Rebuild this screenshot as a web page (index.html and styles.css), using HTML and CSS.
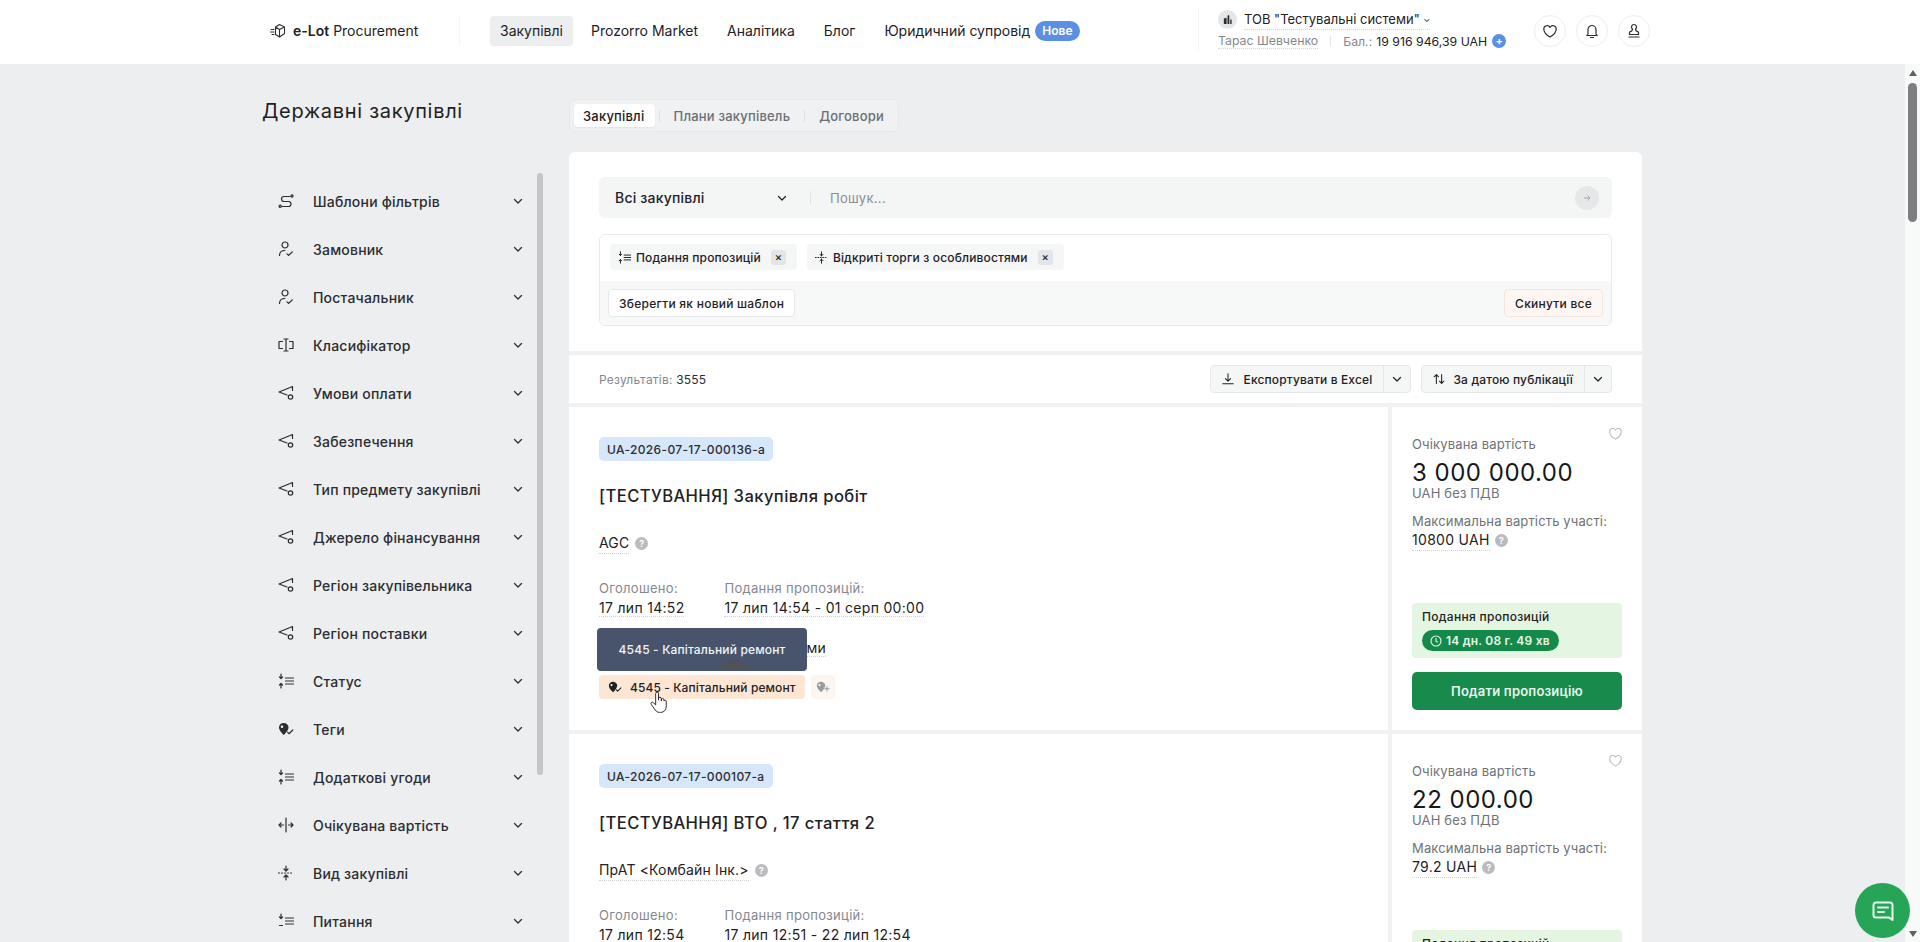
FILE: index.html
```html
<!DOCTYPE HTML>
<html lang="uk">
	<head>
		<title>e-Lot Procurement - Державні закупівлі</title>
		<meta charset="utf-8" />
		<link rel="stylesheet" href="styles.css">
	</head>
	<body>
		<svg class="sprite" xmlns="http://www.w3.org/2000/svg">
			<symbol id="i-route" viewBox="0 0 16 16"><path d="M12 3.500H6a2.500 2.500 0 0 0 0 5h4.500a2.500 2.500 0 0 1 0 5H4"/><circle cx="14" cy="3" r="1.100"/><circle cx="2.200" cy="13.300" r="1.100"/></symbol>
			<symbol id="i-user" viewBox="0 0 16 16"><circle cx="7" cy="4" r="3"/><path d="M1.500 14.500c0-3 2-5 5.500-5"/><path d="M9 12.800l1.600 1.600 3.600-3.400"/></symbol>
			<symbol id="i-class" viewBox="0 0 16 16"><path d="M4.500 4.500H1v7h3.500M11.500 4.500H15v7h-3.500M8 2v12M6 2h4M6 14h4"/></symbol>
			<symbol id="i-send" viewBox="0 0 16 16"><path d="M14.500 1.500L1 7l8 3M14.500 1.500v4"/><circle cx="12.500" cy="12" r="2.200"/></symbol>
			<symbol id="i-status" viewBox="0 0 16 16"><path d="M3 1v4.500M1.500 4L3 5.500 4.500 4M3 15v-4.500M1.500 12L3 10.500 4.500 12M7.500 5h8M7.500 8h8M7.500 11h8"/></symbol>
			<symbol id="i-meal" viewBox="0 0 16 16"><path d="M3 1v4.500M1.500 4L3 5.500 4.500 4M1.500 12.500h3M7.500 5h8M7.500 8h8M7.500 11h8"/></symbol>
			<symbol id="i-tag" viewBox="0 0 16 16"><path class="solid" d="M5.500 2c3 0 5 2 5 4.300 0 3.200-3.500 6.500-4.700 7.700C4.500 12.700 1 9.700 1 6.300 1 4 3 2 5.500 2z"/><circle class="hole" cx="4" cy="5.800" r="1.200"/><path d="M9.500 11.200l1.500 1.500 3.800-3.700"/></symbol>
			<symbol id="i-tag-add" viewBox="0 0 16 16"><path class="solid" d="M5.500 2c3 0 5 2 5 4.300 0 3.200-3.500 6.500-4.700 7.700C4.500 12.700 1 9.700 1 6.300 1 4 3 2 5.500 2z"/><circle class="hole" cx="4" cy="5.800" r="1.200"/><path d="M12.500 7.500v5M10 10h5"/></symbol>
			<symbol id="i-range" viewBox="0 0 16 16"><path d="M8 1v14M1 8h4.500M3 6L1 8l2 2M15 8h-4.500M13 6l2 2-2 2"/></symbol>
			<symbol id="i-kind" viewBox="0 0 16 16"><path d="M8 1v5M6 4l2 2 2-2M8 15v-5M6 12l2-2 2 2"/><path stroke-dasharray="1 2" d="M0.500 8h15"/></symbol>
			<symbol id="i-chev" viewBox="0 0 12 12"><path d="M2.500 4.500L6 8l3.500-3.500"/></symbol>
			<symbol id="i-heart" viewBox="0 0 16 16"><path d="M8 14S1.800 10.500 1.800 6A3.300 3.300 0 0 1 8 4.400 3.300 3.300 0 0 1 14.200 6C14.200 10.500 8 14 8 14z"/></symbol>
		</svg>

		<div class="page">
			<header class="topbar">
				<div class="topbar-inner">
					<a class="logo">
						<svg class="logo-icon" viewBox="0 0 16 16"><path d="M9.500 1.500l5 2.500v6.500l-5 3.500-4-2.500V4zM5.500 4l4 2.500 5-2.500M9.500 6.500V14M1 6.500h3M.5 9h3.500M2 11.500h2"/></svg>
						<span><b>e-Lot</b> Procurement</span>
					</a>
					<nav class="nav">
						<a class="nav-item active">Закупівлі</a>
						<a class="nav-item">Prozorro Market</a>
						<a class="nav-item">Аналітика</a>
						<a class="nav-item">Блог</a>
						<a class="nav-item">Юридичний супровід<span class="badge-new">Нове</span></a>
					</nav>
					<div class="account">
						<div class="account-line">
							<span class="org-icon"><svg viewBox="0 0 12 12"><path d="M2 11V5l3-1v7zM6 11V2l1.500-1 .5 1v9zM9 11V6h1.500v5z"/></svg></span>
							<span class="org-name">ТОВ "Тестувальні системи" <span class="org-caret">⌄</span></span>
						</div>
						<div class="account-line small">
							<span class="user-name">Тарас Шевченко</span>
							<span class="account-sep"></span>
							<span class="balance-label">Бал.:</span>
							<span class="balance">19 916 946,39 UAH</span>
							<span class="plus-round">+</span>
						</div>
					</div>
					<div class="round-btns">
						<a class="round-btn"><svg class="ico"><use href="#i-heart"/></svg></a>
						<a class="round-btn"><svg class="ico" viewBox="0 0 16 16"><path d="M4 11V6.500a4 4 0 0 1 8 0V11l1.200 1.500H2.800zM6.500 14.500h3"/></svg></a>
						<a class="round-btn"><svg class="ico" viewBox="0 0 16 16"><path d="M8 1.500a2.500 2.500 0 0 0-1.500 4.500c0 2-1 2.500-3 3v2.500h9V9c-2-.5-3-1-3-3A2.500 2.500 0 0 0 8 1.500zM3 14h10"/></svg></a>
					</div>
				</div>
			</header>

			<div class="layout">
				<aside class="sidebar">
					<h1 class="page-title">Державні закупівлі</h1>
					<div class="filter-list">
						<div class="filter-thumb"></div>
						<div class="filter-item"><svg class="ico"><use href="#i-route"/></svg><span>Шаблони фільтрів</span><svg class="chev"><use href="#i-chev"/></svg></div>
						<div class="filter-item"><svg class="ico"><use href="#i-user"/></svg><span>Замовник</span><svg class="chev"><use href="#i-chev"/></svg></div>
						<div class="filter-item"><svg class="ico"><use href="#i-user"/></svg><span>Постачальник</span><svg class="chev"><use href="#i-chev"/></svg></div>
						<div class="filter-item"><svg class="ico"><use href="#i-class"/></svg><span>Класифікатор</span><svg class="chev"><use href="#i-chev"/></svg></div>
						<div class="filter-item"><svg class="ico"><use href="#i-send"/></svg><span>Умови оплати</span><svg class="chev"><use href="#i-chev"/></svg></div>
						<div class="filter-item"><svg class="ico"><use href="#i-send"/></svg><span>Забезпечення</span><svg class="chev"><use href="#i-chev"/></svg></div>
						<div class="filter-item"><svg class="ico"><use href="#i-send"/></svg><span>Тип предмету закупівлі</span><svg class="chev"><use href="#i-chev"/></svg></div>
						<div class="filter-item"><svg class="ico"><use href="#i-send"/></svg><span>Джерело фінансування</span><svg class="chev"><use href="#i-chev"/></svg></div>
						<div class="filter-item"><svg class="ico"><use href="#i-send"/></svg><span>Регіон закупівельника</span><svg class="chev"><use href="#i-chev"/></svg></div>
						<div class="filter-item"><svg class="ico"><use href="#i-send"/></svg><span>Регіон поставки</span><svg class="chev"><use href="#i-chev"/></svg></div>
						<div class="filter-item"><svg class="ico"><use href="#i-status"/></svg><span>Статус</span><svg class="chev"><use href="#i-chev"/></svg></div>
						<div class="filter-item"><svg class="ico"><use href="#i-tag"/></svg><span>Теги</span><svg class="chev"><use href="#i-chev"/></svg></div>
						<div class="filter-item"><svg class="ico"><use href="#i-status"/></svg><span>Додаткові угоди</span><svg class="chev"><use href="#i-chev"/></svg></div>
						<div class="filter-item"><svg class="ico"><use href="#i-range"/></svg><span>Очікувана вартість</span><svg class="chev"><use href="#i-chev"/></svg></div>
						<div class="filter-item"><svg class="ico"><use href="#i-kind"/></svg><span>Вид закупівлі</span><svg class="chev"><use href="#i-chev"/></svg></div>
						<div class="filter-item"><svg class="ico"><use href="#i-meal"/></svg><span>Питання</span><svg class="chev"><use href="#i-chev"/></svg></div>
					</div>
				</aside>

				<main class="content">
					<div class="tabs">
						<a class="tab active">Закупівлі</a>
						<span class="tab-sep"></span>
						<a class="tab">Плани закупівель</a>
						<span class="tab-sep"></span>
						<a class="tab">Договори</a>
					</div>

					<section class="card">
						<div class="filters">
							<div class="search">
								<div class="search-type">Всі закупівлі<svg class="chev"><use href="#i-chev"/></svg></div>
								<div class="search-input">Пошук...</div>
								<span class="search-go"><svg viewBox="0 0 12 12"><path d="M3 6h6M6.500 3.500L9 6 6.500 8.500"/></svg></span>
							</div>
							<div class="filter-box">
								<div class="chips">
									<span class="chip"><svg class="ico"><use href="#i-status"/></svg>Подання пропозицій<span class="chip-x">×</span></span>
									<span class="chip"><svg class="ico"><use href="#i-kind"/></svg>Відкриті торги з особливостями<span class="chip-x">×</span></span>
								</div>
								<div class="filter-actions">
									<a class="btn-plain">Зберегти як новий шаблон</a>
									<a class="btn-reset">Скинути все</a>
								</div>
							</div>
						</div>

						<div class="results-bar">
							<div class="results-count">Результатів: <b>3555</b></div>
							<div class="split-btn">
								<a class="split-main"><svg class="ico" viewBox="0 0 16 16"><path d="M8 2v8M5 7.500L8 10.500l3-3M2 13.500h12"/></svg>Експортувати в Excel</a>
								<a class="split-caret"><svg class="chev"><use href="#i-chev"/></svg></a>
							</div>
							<div class="split-btn">
								<a class="split-main sort"><svg class="ico" viewBox="0 0 16 16"><path d="M5 13V3M2.500 5.500L5 3l2.500 2.500M11 3v10M8.500 10.500L11 13l2.500-2.500"/></svg>За датою публікації</a>
								<a class="split-caret"><svg class="chev"><use href="#i-chev"/></svg></a>
							</div>
						</div>

						<article class="tender">
							<div class="tender-main">
								<span class="tender-id">UA-2026-07-17-000136-a</span>
								<h2 class="tender-title">[ТЕСТУВАННЯ] Закупівля робіт</h2>
								<div class="tender-buyer"><span class="dotted">AGC</span><span class="help">?</span></div>
								<div class="dates">
									<div>
										<div class="date-label">Оголошено:</div>
										<div class="date-value"><span class="dotted">17 лип 14:52</span></div>
									</div>
									<div>
										<div class="date-label">Подання пропозицій:</div>
										<div class="date-value"><span class="dotted">17 лип 14:54 - 01 серп 00:00</span></div>
									</div>
								</div>
								<div class="tender-kind"><span class="dotted">Відкриті торги з особливостями</span></div>
								<div class="tags">
									<div class="tooltip">4545 - Капітальний ремонт<span class="tooltip-arrow"></span></div>
									<span class="tag"><svg class="ico"><use href="#i-tag"/></svg>4545 - Капітальний ремонт</span>
									<span class="tag-add"><svg class="ico"><use href="#i-tag-add"/></svg></span>
									<svg class="hand" viewBox="0 0 18 24"><path d="M6 11V3a1.500 1.500 0 0 1 3 0v7V8.500a1.500 1.500 0 0 1 3 0V11 9.800a1.400 1.400 0 0 1 2.800 0V11v-.2a1.300 1.300 0 0 1 2.400.5V16c0 4-2 7-6 7H10c-3 0-4-2-5.500-4L1.300 14.500c-1-1.500.8-3 2.200-1.800L6 15z"/></svg>
								</div>
							</div>
							<div class="tender-side">
								<svg class="side-heart"><use href="#i-heart"/></svg>
								<div class="side-label">Очікувана вартість</div>
								<div class="side-amount">3 000 000.00</div>
								<div class="side-label tax">UAH без ПДВ</div>
								<div class="side-label max">Максимальна вартість участі:</div>
								<div class="side-value"><span class="dotted">10800 UAH</span><span class="help">?</span></div>
								<div class="status-box">
									<div class="status-name">Подання пропозицій</div>
									<span class="timer"><svg viewBox="0 0 12 12"><circle cx="6" cy="6" r="5"/><path d="M6 3v3.200l2 1.200"/></svg>14 дн. 08 г. 49 хв</span>
								</div>
								<a class="btn-submit">Подати пропозицію</a>
							</div>
						</article>

						<article class="tender">
							<div class="tender-main">
								<span class="tender-id">UA-2026-07-17-000107-a</span>
								<h2 class="tender-title">[ТЕСТУВАННЯ] ВТО , 17 стаття 2</h2>
								<div class="tender-buyer"><span class="dotted">ПрАТ &lt;Комбайн Інк.&gt;</span><span class="help">?</span></div>
								<div class="dates">
									<div>
										<div class="date-label">Оголошено:</div>
										<div class="date-value"><span class="dotted">17 лип 12:54</span></div>
									</div>
									<div>
										<div class="date-label">Подання пропозицій:</div>
										<div class="date-value"><span class="dotted">17 лип 12:51 - 22 лип 12:54</span></div>
									</div>
								</div>
							</div>
							<div class="tender-side">
								<svg class="side-heart"><use href="#i-heart"/></svg>
								<div class="side-label">Очікувана вартість</div>
								<div class="side-amount">22 000.00</div>
								<div class="side-label tax">UAH без ПДВ</div>
								<div class="side-label max">Максимальна вартість участі:</div>
								<div class="side-value"><span class="dotted">79.2 UAH</span><span class="help">?</span></div>
								<div class="status-box">
									<div class="status-name">Подання пропозицій</div>
								</div>
								<a class="btn-submit">Подати пропозицію</a>
							</div>
						</article>
					</section>
				</main>
			</div>
		</div>

		<div class="page-scrollbar">
			<span class="scroll-up"></span>
			<span class="scroll-thumb"></span>
			<span class="scroll-down"></span>
		</div>

		<a class="chat-btn"><svg viewBox="0 0 24 24"><path d="M5 3.500h14A2.500 2.500 0 0 1 21.500 6v15l-3.500-2.500H5A2.500 2.500 0 0 1 2.500 16V6A2.500 2.500 0 0 1 5 3.500zM7 8.500h10M7 13h6"/></svg></a>
	</body>
</html>
```

FILE: styles.css
```css
* {
	box-sizing: border-box;
}

html,
body {
	height: 100%;
}

body {
	margin: 0;
	display: flex;
	overflow: hidden;
	background: #edeef0;
	color: #1f2125;
	font-family: Inter, "Noto Sans", sans-serif;
	font-size: 14px;
}

.sprite {
	display: none;
}

.page {
	flex: 1;
	min-width: 0;
}

.ico,
.chev {
	fill: none;
	stroke: currentColor;
	stroke-width: 1.2;
	stroke-linecap: round;
	stroke-linejoin: round;
	flex: none;
}

.ico {
	width: 16px;
	height: 16px;
}

.chev {
	width: 12px;
	height: 12px;
}

.solid {
	fill: currentColor;
	stroke: none;
}

.hole {
	fill: #fff;
	stroke: none;
}

/* header */

.topbar {
	height: 64px;
	background: #fff;
}

.topbar-inner {
	width: 1396px;
	height: 100%;
	margin-left: 254px;
	padding: 0 0 3px 16px;
	display: flex;
	align-items: center;
}

.logo {
	width: 189px;
	display: flex;
	align-items: center;
	gap: 7px;
	font-size: 14px;
	white-space: nowrap;
}

.logo b {
	font-weight: 600;
}

.logo-icon {
	width: 16px;
	height: 16px;
	flex: none;
	fill: none;
	stroke: #2b2d31;
	stroke-width: 1.1;
	stroke-linejoin: round;
	stroke-linecap: round;
}

.nav {
	height: 30px;
	display: flex;
	align-items: center;
	gap: 19px;
	padding-left: 30px;
	border-left: 1px solid #f3f4f5;
}

.nav-item {
	height: 30px;
	padding: 0 5px;
	display: flex;
	align-items: center;
	gap: 5px;
	white-space: nowrap;
}

.nav-item.active {
	width: 83px;
	margin-right: -6px;
	padding: 0 10px;
	background: #edeef0;
	border-radius: 4px;
}

.badge-new {
	height: 20px;
	padding: 0 7px;
	display: inline-flex;
	align-items: center;
	background: #5a90e4;
	color: #fff;
	border-radius: 10px;
	font-size: 12px;
	font-weight: 600;
}

.account {
	align-self: flex-start;
	width: 336px;
	height: 44px;
	margin: 7px 0 0 auto;
	padding-left: 19px;
	border-left: 1px solid #f3f4f5;
	font-size: 13px;
}

.account-line {
	height: 24px;
	display: flex;
	align-items: center;
	gap: 7px;
}

.account-line.small {
	height: 20px;
	gap: 0;
	font-size: 12.3px;
}

.org-icon {
	width: 19px;
	height: 19px;
	display: flex;
	align-items: center;
	justify-content: center;
	background: #e4e6ea;
	border-radius: 50%;
}

.org-icon svg {
	width: 11px;
	height: 11px;
	fill: #2b2d31;
}

.org-name {
	border-bottom: 1px dotted #d4d6da;
	line-height: 20px;
}

.org-caret {
	font-size: 9px;
	vertical-align: 2px;
}

.user-name {
	color: #84888f;
	border-bottom: 1px dotted #d4d6da;
}

.account-sep {
	width: 1px;
	height: 10px;
	margin: 0 12px;
	background: #e4e6ea;
}

.balance-label {
	color: #84888f;
	margin-right: 4px;
}

.plus-round {
	width: 14px;
	height: 14px;
	margin-left: 5px;
	display: flex;
	align-items: center;
	justify-content: center;
	background: #5a90e4;
	color: #fff;
	border-radius: 50%;
	font-size: 11px;
	font-weight: 600;
}

.round-btns {
	display: flex;
	gap: 10px;
}

.round-btn {
	width: 32px;
	height: 32px;
	display: flex;
	align-items: center;
	justify-content: center;
	border: 1px solid #eceef0;
	border-radius: 50%;
	color: #2b2d31;
}

/* sidebar */

.layout {
	width: 1380px;
	margin-left: 262px;
	display: flex;
}

.sidebar {
	width: 307px;
	flex: none;
	padding-top: 32px;
}

.page-title {
	margin: 0;
	font-size: 20px;
	line-height: 30px;
	font-weight: 400;
	letter-spacing: 0.7px;
}

.filter-list {
	position: relative;
	width: 281px;
	height: 754px;
	margin-top: 47px;
	padding-top: 4px;
	overflow: hidden;
}

.filter-thumb {
	position: absolute;
	top: 0;
	right: 0;
	width: 6px;
	height: 602px;
	background: #c4c6c9;
	border-radius: 3px;
}

.filter-item {
	width: 262px;
	height: 48px;
	padding-left: 16px;
	display: flex;
	align-items: center;
	font-weight: 500;
	letter-spacing: 0.2px;
	color: #2b2d31;
}

.filter-item .ico {
	margin-right: 19px;
}

.filter-item span {
	flex: 1;
}

/* tabs */

.content {
	flex: 1;
	min-width: 0;
	padding-top: 35px;
}

.tabs {
	width: 330px;
	height: 33px;
	padding: 4px;
	display: flex;
	align-items: center;
	background: #f0f1f2;
	border: 1px solid #e6e8ea;
	border-radius: 6px;
	font-size: 13px;
	font-weight: 500;
	letter-spacing: 0.2px;
	color: #6b6f76;
}

.tab {
	height: 23px;
	padding: 0 10px;
	display: flex;
	align-items: center;
	white-space: nowrap;
}

.tab.active {
	width: 81px;
	padding: 0 9px;
	background: #fff;
	color: #1f2125;
	border-radius: 4px;
	box-shadow: 0 1px 2px rgba(0, 0, 0, 0.06);
}

.tab-sep {
	width: 1px;
	height: 12px;
	margin: 0 4px;
	background: #dfe1e4;
}

/* search card */

.card {
	margin-top: 20px;
	background: #fff;
	border-radius: 6px 6px 0 0;
}

.filters {
	padding: 25px 30px;
}

.search {
	height: 41px;
	padding: 0 13px 0 16px;
	display: flex;
	align-items: center;
	background: #f4f5f5;
	border-radius: 6px;
}

.search-type {
	width: 196px;
	height: 14px;
	margin-right: 19px;
	padding-right: 22px;
	display: flex;
	align-items: center;
	justify-content: space-between;
	border-right: 1px solid #e2e4e6;
	font-weight: 500;
	letter-spacing: 0.2px;
}

.search-input {
	flex: 1;
	color: #8a8e94;
	font-size: 13px;
	letter-spacing: 0.3px;
}

.search-go {
	width: 24px;
	height: 24px;
	display: flex;
	align-items: center;
	justify-content: center;
	background: #e6e7e9;
	border-radius: 50%;
}

.search-go svg {
	width: 12px;
	height: 12px;
	fill: none;
	stroke: #a4a7ac;
	stroke-width: 1;
}

.filter-box {
	height: 92px;
	margin-top: 16px;
	border: 1px solid #e8eaec;
	border-radius: 6px;
	overflow: hidden;
}

.chips {
	height: 46px;
	padding: 9px 10px 0;
	display: flex;
	gap: 10px;
}

.chip {
	height: 26px;
	padding: 0 11px 0 8px;
	display: flex;
	align-items: center;
	gap: 5px;
	background: #f5f6f6;
	border-radius: 4px;
	font-size: 12px;
	font-weight: 500;
	letter-spacing: 0.15px;
}

.chip .ico {
	width: 13px;
	height: 13px;
}

.chip-x {
	width: 15px;
	height: 15px;
	margin-left: 5px;
	display: flex;
	align-items: center;
	justify-content: center;
	background: #e4e5e8;
	border-radius: 3px;
	font-size: 11px;
}

.filter-actions {
	height: 44px;
	padding: 8px 8px 0;
	display: flex;
	justify-content: space-between;
	background: #f7f8f8;
}

.btn-plain,
.btn-reset {
	height: 28px;
	padding: 0 10px;
	display: flex;
	align-items: center;
	background: #fff;
	border: 1px solid #e6e8ea;
	border-radius: 4px;
	font-size: 12px;
	font-weight: 500;
	letter-spacing: 0.25px;
}

.btn-reset {
	background: #fdf6f2;
	border-color: #f6e6dd;
}

/* results */

.results-bar {
	height: 56px;
	padding: 0 30px;
	display: flex;
	align-items: center;
	gap: 10px;
	border-top: 4px solid #f0f1f2;
	border-bottom: 4px solid #f0f1f2;
	font-size: 12px;
}

.results-count {
	margin-right: auto;
	color: #84888f;
	letter-spacing: 0.2px;
}

.results-count b {
	color: #2b2d31;
	font-weight: 400;
}

.split-btn {
	height: 28px;
	display: flex;
	background: #f5f6f6;
	border: 1px solid #e6e8ea;
	border-radius: 4px;
	font-weight: 500;
	letter-spacing: 0.15px;
}

.split-main {
	padding: 0 11px 0 10px;
	display: flex;
	align-items: center;
	gap: 9px;
}

.split-main.sort {
	gap: 7px;
}

.split-main .ico {
	width: 14px;
	height: 14px;
}

.split-caret {
	width: 27px;
	display: flex;
	align-items: center;
	justify-content: center;
	border-left: 1px solid #e6e8ea;
}

/* tender rows */

.tender {
	height: 327px;
	display: flex;
	border-bottom: 4px solid #f0f1f2;
}

.tender-main {
	flex: 1;
	min-width: 0;
	padding: 30px 30px 0;
	border-right: 4px solid #f0f1f2;
}

.tender-id {
	height: 24px;
	padding: 0 8px;
	display: inline-flex;
	align-items: center;
	background: #d6e6fb;
	border-radius: 5px;
	font-size: 12px;
	font-weight: 500;
	letter-spacing: 0.35px;
	color: #2b2d31;
}

.tender-title {
	margin: 23px 0 0;
	font-size: 16.6px;
	line-height: 24px;
	font-weight: 500;
	letter-spacing: 0.4px;
}

.dotted {
	border-bottom: 1px dotted #d0d2d6;
}

.tender-buyer {
	margin-top: 25px;
	line-height: 20px;
	display: flex;
	align-items: center;
	letter-spacing: 0.15px;
}

.help {
	width: 13px;
	height: 13px;
	margin-left: 6px;
	display: inline-flex;
	align-items: center;
	justify-content: center;
	background: #b9bbbf;
	color: #fff;
	border-radius: 50%;
	font-size: 9px;
	font-weight: 700;
	letter-spacing: 0;
	flex: none;
}

.dates {
	margin-top: 26px;
	display: flex;
	gap: 40px;
}

.date-label {
	line-height: 16px;
	font-size: 13px;
	color: #84888f;
	letter-spacing: 0.3px;
}

.date-value {
	margin-top: 2px;
	line-height: 20px;
	letter-spacing: 0.3px;
}

.tender-kind {
	margin-top: 20px;
	line-height: 20px;
	letter-spacing: 0.25px;
}

.tags {
	position: relative;
	margin-top: 17px;
	display: flex;
	gap: 6px;
}

.tag {
	height: 24px;
	width: 206px;
	padding-left: 9px;
	display: flex;
	align-items: center;
	gap: 8px;
	background: #fde6d4;
	border-radius: 4px;
	font-size: 12px;
	font-weight: 500;
	letter-spacing: 0.1px;
}

.tag .ico {
	width: 14px;
	height: 14px;
}

.tag .hole {
	fill: #fde6d4;
}

.tag-add {
	width: 24px;
	height: 24px;
	display: flex;
	align-items: center;
	justify-content: center;
	background: #fdf5f0;
	border-radius: 4px;
	color: #9a9b9d;
}

.tag-add .ico {
	width: 14px;
	height: 14px;
}

.tooltip {
	position: absolute;
	left: -2px;
	top: -47px;
	width: 210px;
	height: 43px;
	display: flex;
	align-items: center;
	justify-content: center;
	background: #47546c;
	color: #f2f4f7;
	border-radius: 4px;
	font-size: 12px;
	font-weight: 500;
	letter-spacing: 0.15px;
}

.tooltip-arrow {
	position: absolute;
	left: 118px;
	bottom: 2px;
	width: 0;
	height: 0;
	border-left: 20px solid transparent;
	border-right: 20px solid transparent;
	border-bottom: 11px solid #4f5259;
}

.hand {
	position: absolute;
	left: 51px;
	top: 15px;
	width: 17px;
	height: 24px;
	fill: #fff;
	stroke: #222;
	stroke-width: 1;
	stroke-linejoin: round;
}

.tender-side {
	position: relative;
	width: 250px;
	flex: none;
	padding: 29px 20px 20px;
	display: flex;
	flex-direction: column;
}

.side-heart {
	position: absolute;
	top: 19px;
	right: 19px;
	width: 15px;
	height: 15px;
	fill: none;
	stroke: #b9bbbf;
	stroke-width: 1.1;
}

.side-label {
	line-height: 16px;
	font-size: 13px;
	color: #6e7278;
	letter-spacing: 0.15px;
}

.side-label.tax {
	margin-top: -3px;
}

.side-label.max {
	margin-top: 12px;
}

.side-amount {
	margin-top: 6px;
	line-height: 30px;
	font-size: 24px;
	letter-spacing: 0.5px;
	color: #16181b;
}

.side-value {
	margin-top: 1px;
	line-height: 20px;
	display: flex;
	align-items: center;
	letter-spacing: 0.3px;
}

.side-value .help {
	margin-left: 5px;
}

.status-box {
	height: 55px;
	margin-top: auto;
	padding: 6px 10px;
	background: #e4f6e2;
	border-radius: 4px;
}

.status-name {
	line-height: 16px;
	font-size: 12px;
	font-weight: 500;
	letter-spacing: 0.3px;
}

.timer {
	height: 21px;
	margin-top: 5px;
	padding: 0 9px 0 8px;
	display: inline-flex;
	align-items: center;
	gap: 4px;
	background: #138a4a;
	color: #e6f7ea;
	border-radius: 11px;
	font-size: 12px;
	font-weight: 600;
	letter-spacing: 0.2px;
}

.timer svg {
	width: 12px;
	height: 12px;
	fill: none;
	stroke: currentColor;
	stroke-width: 1.1;
}

.btn-submit {
	height: 38px;
	margin-top: 14px;
	display: flex;
	align-items: center;
	justify-content: center;
	background: #178a4c;
	color: #e9f5ee;
	border-radius: 5px;
	font-size: 13px;
	font-weight: 600;
	letter-spacing: 0.2px;
}

/* fake browser scrollbar and chat */

.page-scrollbar {
	width: 15px;
	flex: none;
	padding-top: 70px;
	display: flex;
	flex-direction: column;
	align-items: center;
	background: linear-gradient(#fff 64px, #f8f9f9 64px);
}

.scroll-up,
.scroll-down {
	width: 0;
	height: 0;
	border-left: 4px solid transparent;
	border-right: 4px solid transparent;
}

.scroll-up {
	border-bottom: 6px solid #5f6064;
}

.scroll-down {
	margin-top: auto;
	margin-bottom: 5px;
	border-top: 6px solid #5f6064;
}

.scroll-thumb {
	width: 9px;
	height: 139px;
	margin-top: 7px;
	background: #7e7f82;
	border-radius: 5px;
}

.chat-btn {
	position: fixed;
	left: 1855px;
	top: 883px;
	width: 55px;
	height: 55px;
	display: flex;
	align-items: center;
	justify-content: center;
	background: #27a556;
	border-radius: 50%;
}

.chat-btn svg {
	width: 24px;
	height: 24px;
	fill: none;
	stroke: #e6f6ec;
	stroke-width: 2;
	stroke-linecap: round;
	stroke-linejoin: round;
}
```
